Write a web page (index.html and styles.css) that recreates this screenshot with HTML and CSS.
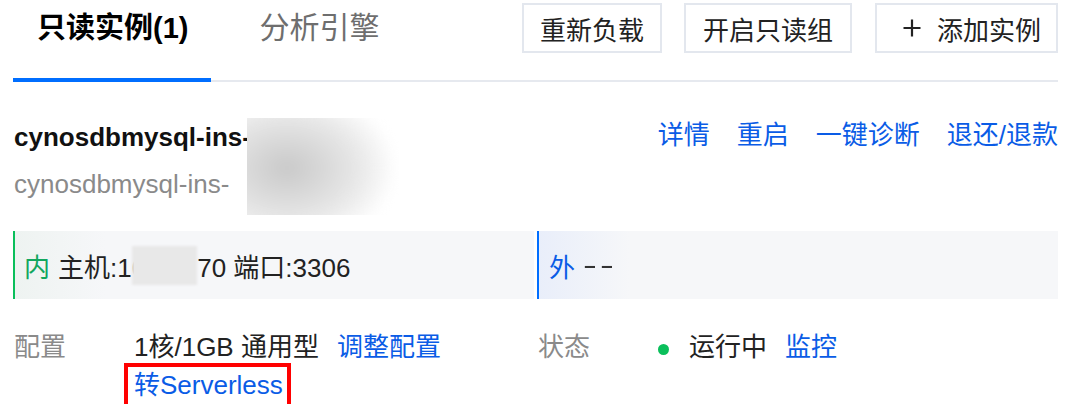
FILE: index.html
```html
<!DOCTYPE html>
<html lang="zh-CN">
<head>
<meta charset="utf-8">
<title>只读实例</title>
<link rel="stylesheet" href="styles.css">
</head>
<body>
<div class="page">
  <div class="tabs-bar">
    <div class="tabs">
      <div class="tab active">只读实例(1)</div>
      <div class="tab">分析引擎</div>
    </div>
    <div class="actions">
      <button class="btn">重新负载</button>
      <button class="btn btn-wide">开启只读组</button>
      <button class="btn btn-add"><svg class="plus" viewBox="0 0 24 24" width="24" height="24"><path d="M12 3.5v17M3.5 12h17" stroke="#222" stroke-width="2.2" fill="none"/></svg>添加实例</button>
    </div>
  </div>

  <div class="instance">
    <div class="inst-head">
      <div class="inst-names">
        <div class="inst-id">cynosdbmysql-ins-</div>
        <div class="inst-name">cynosdbmysql-ins-</div>
        <div class="mask-blob"><div class="mask-blob-inner"></div></div>
      </div>
      <div class="inst-links">
        <a class="link">详情</a>
        <a class="link">重启</a>
        <a class="link">一键诊断</a>
        <a class="link">退还/退款</a>
      </div>
    </div>

    <div class="addr-row">
      <div class="addr addr-in"><span class="tag">内</span>主机:10<span class="mask"></span>70 端口:3306</div>
      <div class="addr addr-out"><span class="tag">外</span><span class="dash">--</span></div>
    </div>

    <div class="info-row">
      <div class="info">
        <span class="label">配置</span>
        <div class="value">
          <span>1核/1GB 通用型</span>
          <a class="link">调整配置</a>
          <a class="link hl">转Serverless</a>
        </div>
      </div>
      <div class="info">
        <span class="label">状态</span>
        <div class="value">
          <span class="status"><span class="dot"></span>运行中</span>
          <a class="link">监控</a>
        </div>
      </div>
    </div>
  </div>
</div>
</body>
</html>
```

FILE: styles.css
```css
* { box-sizing: border-box; }

html, body {
  margin: 0;
  padding: 0;
  background: #fff;
}

body {
  font-family: "Liberation Sans", "Noto Sans CJK SC", sans-serif;
  font-size: 26px;
  color: #222;
}

.page {
  margin: 0 29px 0 13px;
}

/* header with tabs and buttons */
.tabs-bar {
  display: flex;
  align-items: flex-start;
  height: 82px;
  border-bottom: 2px solid #e6e9ef;
}

.tabs {
  display: flex;
  gap: 24px;
}

.tab {
  position: relative;
  height: 80px;
  padding: 0 24px;
  line-height: 56px;
  font-size: 30px;
  color: #6e6e6e;
}

.tab.active {
  color: #000;
  font-weight: bold;
  font-size: 29px;
  padding: 0 23px 0 24px;
}

.tab.active::after {
  content: "";
  position: absolute;
  left: 0;
  right: 0;
  bottom: -2px;
  height: 4px;
  background: #006eff;
}

.actions {
  margin-left: auto;
  margin-top: 3px;
  display: flex;
  gap: 22px;
}

.btn {
  height: 50px;
  padding: 0 16px;
  border: 2px solid #e3e7ee;
  background: #fff;
  font-family: inherit;
  font-size: 26px;
  color: #222;
  display: flex;
  align-items: center;
}

.btn-wide {
  padding: 0 17px;
}

.btn-add {
  margin-left: 1px;
  padding: 0 15px 0 23px;
}

.plus {
  margin-right: 13px;
}

/* instance block */
.instance {
  padding-top: 37px;
}

.inst-head {
  display: flex;
  justify-content: space-between;
  align-items: flex-start;
}

.inst-names {
  position: relative;
  width: fit-content;
  padding-left: 1px;
}

.inst-id {
  font-weight: bold;
  line-height: 36px;
  color: #111;
}

.inst-name {
  margin-top: 11px;
  line-height: 36px;
  color: #8a8a8a;
}

.mask-blob {
  position: absolute;
  left: calc(100% - 4px);
  top: -1px;
  width: 152px;
  height: 97px;
  overflow: hidden;
}

.mask-blob-inner {
  position: absolute;
  left: -30px;
  top: -30px;
  width: 200px;
  height: 160px;
  background: radial-gradient(ellipse 55% 50% at 35% 50%, #c9c9c9 0%, #d9d9d9 35%, #e8e8e8 65%, rgba(255,255,255,0) 100%);
  filter: blur(6px);
}

.inst-links {
  display: flex;
  gap: 27px;
  line-height: 32px;
}

.link {
  color: #0a5ce6;
  cursor: pointer;
}

/* address row */
.addr-row {
  margin-top: 29px;
  display: grid;
  grid-template-columns: 1fr 1fr;
  column-gap: 3px;
}

.addr {
  height: 68px;
  display: flex;
  align-items: center;
  padding-left: 9px;
  background: #f6f7f9;
  color: #222;
}

.addr-in {
  border-left: 2px solid #0abf5b;
  background: linear-gradient(to right, #eef3f1 0, #f6f7f9 90px);
}

.addr-out {
  border-left: 2px solid #006eff;
  background: linear-gradient(to right, #e9eefa 0, #f6f7f9 90px);
  padding-left: 10px;
}

.tag {
  margin-right: 8px;
}

.addr-in .tag { color: #12a75e; }
.addr-out .tag { color: #0a5ce6; }

.dash {
  letter-spacing: 2px;
  transform: scaleX(1.6);
  transform-origin: left center;
  display: inline-block;
  color: #333;
}

.mask {
  display: inline-block;
  width: 65px;
  height: 39px;
  margin-left: -14px;
  background: #e8e8e8;
  filter: blur(1px);
}

/* info rows */
.info-row {
  margin-top: 29px;
  display: grid;
  grid-template-columns: 1fr 1fr;
  column-gap: 3px;
}

.info {
  display: flex;
  align-items: flex-start;
  padding-left: 1px;
}

.label {
  flex: 0 0 120px;
  line-height: 38px;
  color: #8a8a8a;
}

.value {
  flex: 1;
  display: flex;
  flex-wrap: wrap;
  align-items: center;
  column-gap: 18px;
  line-height: 38px;
}

.status {
  display: flex;
  align-items: center;
}

.dot {
  width: 11px;
  height: 11px;
  border-radius: 50%;
  background: #0abf5b;
  margin: 4px 20px 0 0;
}

.hl {
  position: relative;
}

.hl::after {
  content: "";
  position: absolute;
  left: -10px;
  right: -8px;
  top: -3px;
  bottom: -6px;
  border: 4px solid #f00;
}
```
